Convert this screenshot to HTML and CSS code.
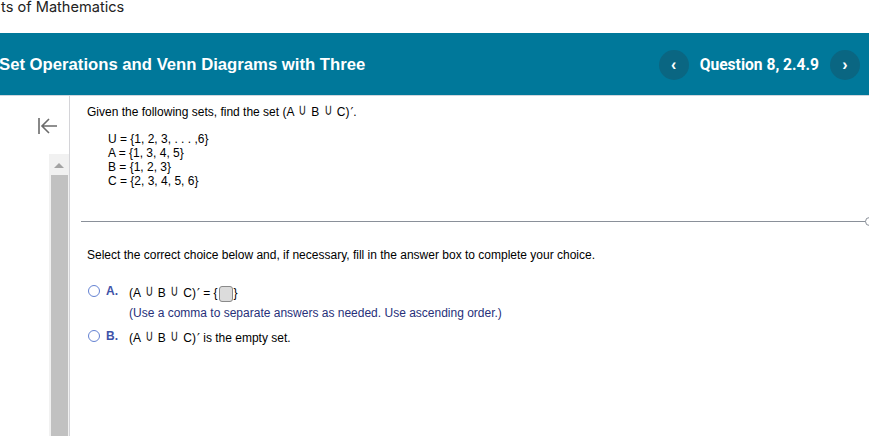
FILE: index.html
```html
<!DOCTYPE html>
<html>
<head>
    <meta charset="utf-8">
    <title>Question 8, 2.4.9</title>
    <link rel="stylesheet" href="styles.css">
</head>
<body>
    <div class="topbar">ts of Mathematics</div>

    <div class="header">
        <h1 class="title">Set Operations and Venn Diagrams with Three</h1>
        <div class="qnav">
            <span class="navbtn">&#8249;</span>
            <span class="qname">Question 8, 2.4.9</span>
            <span class="navbtn">&#8250;</span>
        </div>
    </div>

    <div class="main">
        <div class="sidebar">
            <svg class="collapse" width="22" height="18" viewBox="0 0 22 18">
                <path d="M2 1 V17 M20 9 H5 M12 2 L5 9 L12 16" fill="none" stroke="#6b6b6b" stroke-width="1.6"/>
            </svg>
            <div class="scroll">
                <div class="scroll-up"></div>
                <div class="thumb"></div>
            </div>
        </div>

        <div class="content">
            <p class="prompt">Given the following sets, find the set (A <span class="op">&#8746;</span> B <span class="op">&#8746;</span> C)<span class="pr">&#8242;</span>.</p>
            <div class="sets">
                <div>U = {1, 2, 3, . . . ,6}</div>
                <div>A = {1, 3, 4, 5}</div>
                <div>B = {1, 2, 3}</div>
                <div>C = {2, 3, 4, 5, 6}</div>
            </div>

            <div class="divider"><span class="knob"></span></div>

            <p class="instr">Select the correct choice below and, if necessary, fill in the answer box to complete your choice.</p>

            <div class="choice">
                <span class="radio"></span>
                <span class="letter">A.</span>
                <div class="ctext">
                    <div>(A <span class="op">&#8746;</span> B <span class="op">&#8746;</span> C)<span class="pr">&#8242;</span> = {<span class="box"></span>}</div>
                    <div class="note">(Use a comma to separate answers as needed. Use ascending order.)</div>
                </div>
            </div>
            <div class="choice">
                <span class="radio"></span>
                <span class="letter">B.</span>
                <div class="ctext">
                    <div>(A <span class="op">&#8746;</span> B <span class="op">&#8746;</span> C)<span class="pr">&#8242;</span> is the empty set.</div>
                </div>
            </div>
        </div>
    </div>
</body>
</html>
```

FILE: styles.css
```css
html, body {
    margin: 0;
    padding: 0;
    background: #fff;
    overflow: hidden;
}
body {
    width: 869px;
    height: 436px;
    font-family: "Liberation Sans", Arial, sans-serif;
    color: #000;
}

.topbar {
    height: 33px;
    padding-left: 1px;
    font-family: Inter, "Liberation Sans", sans-serif;
    font-size: 14.6px;
    line-height: 15px;
    color: #222;
}

.header {
    height: 62px;
    background: #00789a;
    display: flex;
    align-items: center;
    justify-content: space-between;
    border-bottom: 1px solid #cfd6de;
}
.title {
    margin: 2px 0 0 -1px;
    color: #fff;
    font-size: 16.7px;
    font-weight: bold;
    white-space: nowrap;
}
.qnav {
    display: flex;
    align-items: center;
    margin-right: 9px;
    margin-top: 2px;
}
.navbtn {
    width: 30px;
    height: 30px;
    border-radius: 50%;
    background: #0a6682;
    color: #fff;
    display: flex;
    align-items: center;
    justify-content: center;
    font-size: 16px;
    font-weight: bold;
}
.qname {
    color: #fff;
    font-family: Roboto, "Liberation Sans", sans-serif;
    font-weight: bold;
    font-size: 15.6px;
    margin: 0 11px 0 11px;
}

.main {
    display: flex;
    height: 340px;
}
.sidebar {
    width: 69px;
    border-right: 1px solid #d4d4d8;
    display: flex;
    flex-direction: column;
    align-items: flex-end;
}
.collapse {
    margin: 21px 10px 0 0;
}
.scroll {
    width: 20px;
    margin-top: 19px;
    flex: 1;
    background: #f1f1f1;
    display: flex;
    flex-direction: column;
    align-items: center;
}
.scroll-up {
    width: 0;
    height: 0;
    border-left: 5px solid transparent;
    border-right: 5px solid transparent;
    border-bottom: 5px solid #a3a3a3;
    margin: 9px 0 7px;
}
.thumb {
    width: 17px;
    flex: 1;
    background: #c1c1c1;
}

.content {
    flex: 1;
    padding: 9px 0 0 17px;
    font-size: 12px;
    line-height: 14px;
}
.op {
    display: inline-block;
    font-family: "DejaVu Sans", sans-serif;
    font-size: 12px;
    line-height: 12px;
    margin: 0 1px;
    color: #222;
    transform: scale(0.95, 1.32);
    transform-origin: 50% 100%;
}
.pr {
    font-family: "DejaVu Sans", sans-serif;
    font-size: 13px;
    line-height: 12px;
    margin-left: 1px;
}
.prompt {
    margin: 0;
}
.sets {
    margin: 13px 0 0 21px;
}
.divider {
    position: relative;
    height: 1px;
    background: #8a9099;
    margin: 33px 0 0 -6px;
}
.knob {
    position: absolute;
    right: -5px;
    top: -4px;
    width: 7px;
    height: 7px;
    border: 1px solid #8a9099;
    border-radius: 50%;
    background: #fff;
}
.instr {
    margin: 26px 0 0 0;
}

.choice {
    display: flex;
    align-items: flex-start;
    margin-top: 22px;
}
.choice + .choice {
    margin-top: 9px;
}
.radio {
    width: 10px;
    height: 10px;
    border: 1.5px solid #6482d2;
    border-radius: 50%;
    margin: 1px 0 0 1px;
}
.letter {
    color: #3e52a8;
    font-weight: bold;
    font-size: 12px;
    margin-left: 6px;
    width: 23px;
}
.ctext {
    padding-top: 2px;
}
.box {
    display: inline-block;
    width: 12px;
    height: 14px;
    background: #dcdcdc;
    border: 1px solid #8a8a8a;
    border-radius: 3px;
    vertical-align: -5px;
    margin: 0 1px;
}
.note {
    color: #27307a;
    margin-top: 4px;
}
```
